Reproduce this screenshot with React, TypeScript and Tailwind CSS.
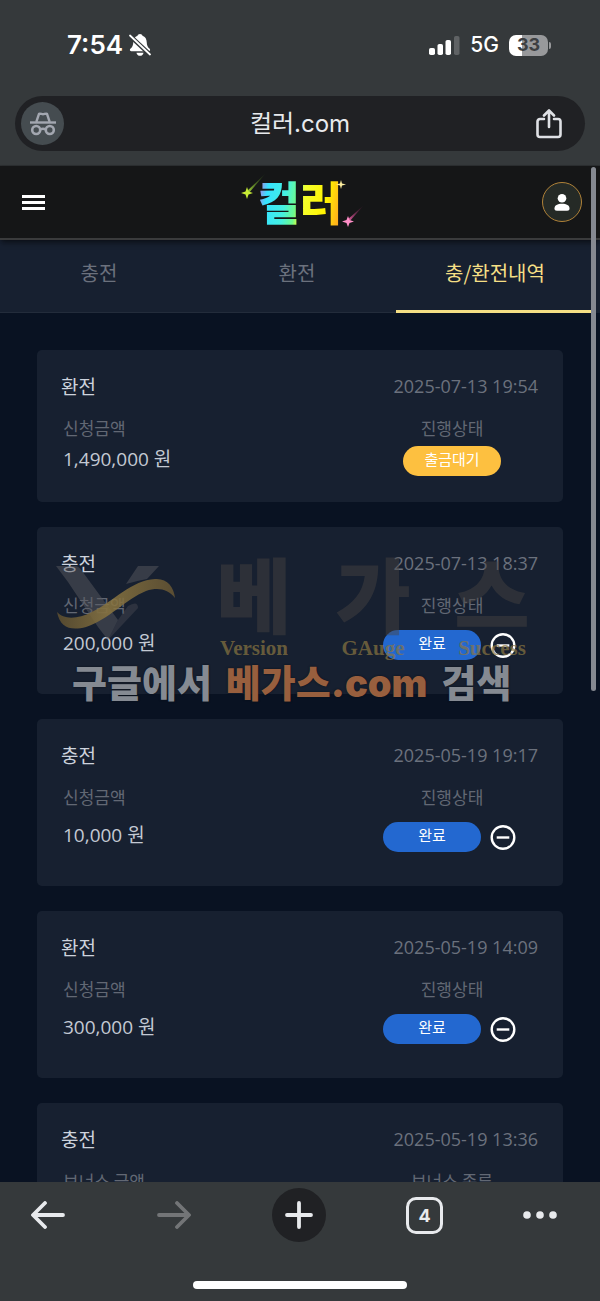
type Entry = {
  kind: string;
  date: string;
  amountLabel: string;
  amount: string;
  statusLabel: string;
  status: "pending" | "done";
};

const tabs = [
  { label: "충전", active: false },
  { label: "환전", active: false },
  { label: "충/환전내역", active: true },
];

const entries: Entry[] = [
  { kind: "환전", date: "2025-07-13 19:54", amountLabel: "신청금액", amount: "1,490,000 원", statusLabel: "진행상태", status: "pending" },
  { kind: "충전", date: "2025-07-13 18:37", amountLabel: "신청금액", amount: "200,000 원", statusLabel: "진행상태", status: "done" },
  { kind: "충전", date: "2025-05-19 19:17", amountLabel: "신청금액", amount: "10,000 원", statusLabel: "진행상태", status: "done" },
  { kind: "환전", date: "2025-05-19 14:09", amountLabel: "신청금액", amount: "300,000 원", statusLabel: "진행상태", status: "done" },
  { kind: "충전", date: "2025-05-19 13:36", amountLabel: "보너스 금액", amount: "10,000 원", statusLabel: "보너스 종류", status: "done" },
];

function StatusBar() {
  return (
    <div className="flex h-24 items-center justify-between pt-1 pr-[49px] pb-[10px] pl-[67px] text-white">
      <div className="flex items-center gap-[6px]">
        <span className="text-[26px] leading-8 font-semibold">7:54</span>
        <svg className="h-[22px] w-[22px]" viewBox="0 0 22 22" aria-hidden="true">
          <path d="M11 0C9.700 0 8.800.8 8.500 1.700 5.700 2.600 4.400 4.900 4.300 8c-.1 3.600-1 5-2.700 6.600C.5 15.700.6 17.200 2.200 17.200h17.600c1.600 0 1.700-1.500.6-2.600C18.700 13 17.800 11.600 17.700 8c-.1-3.100-1.400-5.400-4.200-6.300C13.200.8 12.300 0 11 0Z" fill="#fff" />
          <path d="M7.500 18.700h7c-.3 1.900-1.700 3.100-3.500 3.100s-3.200-1.200-3.500-3.100Z" fill="#fff" />
          <path d="M0 1 22 21.500" stroke="#35393b" strokeWidth="4.500" />
          <path d="M1 1.500 21 20.500" stroke="#fff" strokeWidth="1.800" strokeLinecap="round" />
        </svg>
      </div>
      <div className="flex items-center gap-[10px]">
        <svg className="h-[19px] w-[31px]" viewBox="0 0 31 19" aria-hidden="true">
          <rect x="0" y="12" width="6" height="7" rx="1.800" fill="#fff" />
          <rect x="8.500" y="8" width="5.500" height="11" rx="1.800" fill="#fff" />
          <rect x="16.500" y="4" width="5.500" height="15" rx="1.800" fill="#fff" />
          <rect x="25" y="0" width="5.500" height="19" rx="1.800" fill="#5f6264" />
        </svg>
        <span className="text-[21px] leading-7 font-medium">5G</span>
        <div className="flex items-center gap-px">
          <span className="flex h-[21px] w-[39px] items-center justify-center rounded-[7px] bg-linear-to-r from-white from-33% to-[#98999b] to-33% text-[18px] leading-5 font-bold text-[#3d4042]">
            33
          </span>
          <span className="h-[7px] w-[2px] rounded-r-full bg-[#98999b]" />
        </div>
      </div>
    </div>
  );
}

function AddressBar() {
  return (
    <div className="mx-[15px] mb-[14px] flex h-[55px] items-center justify-between rounded-full bg-[#202124] pr-[23px] pl-[6px]">
      <button aria-label="시크릿 모드" className="flex size-[43px] items-center justify-center rounded-full bg-[#454c50]">
        <svg className="h-6 w-[26px]" viewBox="0 0 26 24" fill="none" aria-hidden="true">
          <path d="M0 10.500h26" stroke="#a3a7b0" strokeWidth="2.400" />
          <path d="M6.300 10 9 1.800c1.500-.5 2.600.5 4 .5s2.500-1 4-.5L19.700 10" stroke="#a3a7b0" strokeWidth="2.400" strokeLinejoin="round" />
          <circle cx="6.200" cy="18" r="4" stroke="#a3a7b0" strokeWidth="2.600" />
          <circle cx="19.800" cy="18" r="4" stroke="#a3a7b0" strokeWidth="2.600" />
          <path d="M10 17.500c2-1 4-1 6 0" stroke="#a3a7b0" strokeWidth="2.400" />
        </svg>
      </button>
      <span className="text-[24px] leading-8 text-[#e8eaed]">컬러.com</span>
      <button aria-label="공유">
        <svg className="h-[30px] w-[26px]" viewBox="0 0 26 30" fill="none" stroke="#dfe1e5" strokeWidth="2.600" strokeLinecap="round" strokeLinejoin="round" aria-hidden="true">
          <path d="M8 10H4a2.500 2.500 0 0 0-2.500 2.500v13A2.500 2.500 0 0 0 4 28h18a2.500 2.500 0 0 0 2.500-2.500v-13A2.500 2.500 0 0 0 22 10h-4" />
          <path d="M13 18V2M8 6.500l5-5 5 5" />
        </svg>
      </button>
    </div>
  );
}

function Logo() {
  return (
    <a href="#" aria-label="컬러" className="relative flex h-[68px] w-[124px] items-center justify-center pr-1 pb-1">
      <span className="bg-linear-to-r bg-[linear-gradient(100deg,#c76be0_2%,#35e3ff_14%,#45f0e0_34%,#6dfb8c_46%,#f4ff2e_53%,#fff200_78%,#ffa51f_96%)] bg-clip-text text-[46px] leading-[60px] font-black text-transparent">
        컬러
      </span>
      <svg className="absolute inset-0 h-full w-full" viewBox="0 0 124 68" aria-hidden="true">
        <defs>
          <linearGradient id="tail-green" x1="0" y1="1" x2="1" y2="0">
            <stop offset="0" stopColor="#b9ef3f" />
            <stop offset="1" stopColor="#4b8a1e" stopOpacity="0" />
          </linearGradient>
          <linearGradient id="tail-pink" x1="0" y1="1" x2="1" y2="0">
            <stop offset="0" stopColor="#ff6cb6" />
            <stop offset="1" stopColor="#8a1e55" stopOpacity="0" />
          </linearGradient>
        </defs>
        <path d="M6 24 26 5 8 26Z" fill="url(#tail-green)" />
        <path d="m7 19 1.500 4.500L13 25l-4.500 1.500L7 31l-1.500-4.500L1 25l4.500-1.500Z" fill="#c9ec36" />
        <path d="M107 52 124 37l-15 17Z" fill="url(#tail-pink)" />
        <path d="m108 48 1.500 4 4.500 1.500-4.500 1.500-1.500 4-1.500-4-4.500-1.500 4.500-1.500Z" fill="#ff8fc8" />
        <path d="m101 12 1 3.500 4 1-4 1-1 3.500-1-3.500-4-1 4-1Z" fill="#fff0a0" />
      </svg>
    </a>
  );
}

function SiteHeader() {
  return (
    <header className="relative z-10 flex h-[74px] shrink-0 items-center justify-between border-b-2 border-[#3a3b3c] bg-[#151617] pr-[18px] pl-[22px] shadow-md shadow-black/40">
      <button aria-label="메뉴" className="flex w-10 flex-col gap-[3px]">
        <span className="h-[3px] w-[23px] bg-white" />
        <span className="h-[3px] w-[23px] bg-white" />
        <span className="h-[3px] w-[23px] bg-white" />
      </button>
      <Logo />
      <button aria-label="내 정보" className="flex size-10 items-center justify-center rounded-full border border-[#b08238] bg-[#252a26]">
        <svg className="h-[17px] w-4" viewBox="0 0 16 17" fill="#fff" aria-hidden="true">
          <circle cx="8" cy="4.300" r="4.300" />
          <path d="M.5 14.200C.5 11.400 3.500 9.800 8 9.800s7.500 1.600 7.500 4.400c0 1.800-.8 2.500-2.300 2.500H2.800C1.300 16.700.5 16 .5 14.200Z" />
        </svg>
      </button>
    </header>
  );
}

function TabBar() {
  return (
    <nav className="flex h-[73px] shrink-0 bg-[#172030] pr-[6px]">
      {tabs.map((tab) => (
        <a
          key={tab.label}
          href="#"
          className={
            tab.active
              ? "flex flex-1 items-center justify-center border-b-[3px] border-[#f5df85] pb-1 text-[20px] text-[#f5df85]"
              : "flex flex-1 items-center justify-center border-b border-[#232c3b] pb-[6px] text-[20px] text-[#6b717d]"
          }
        >
          {tab.label}
        </a>
      ))}
    </nav>
  );
}

function EntryCard({ entry }: { entry: Entry }) {
  const done = entry.status === "done";
  return (
    <article className="rounded-[5px] bg-[#172030] px-6 pt-6 pb-5">
      <div className="flex h-[26px] items-center justify-between text-[19px] leading-6">
        <h2 className="pb-[2px] text-[#cdd3dd]">{entry.kind}</h2>
        <time className="pr-px pb-[2px] font-['Open_Sans',sans-serif] text-[18px] text-[#6b717d]">{entry.date}</time>
      </div>
      <div className="mt-4 flex justify-between">
        <div className="pl-[2px]">
          <div className="h-6 text-[17px] leading-6 text-[#626874]">{entry.amountLabel}</div>
          <div
            className={
              done
                ? "flex h-[57px] items-center pb-1 font-['Open_Sans','Noto_Sans_CJK_KR',sans-serif] text-[19px] text-[#c3c9d3]"
                : "flex h-[42px] items-center pb-1 font-['Open_Sans','Noto_Sans_CJK_KR',sans-serif] text-[19px] text-[#c3c9d3]"
            }
          >
            {entry.amount}
          </div>
        </div>
        <div className="w-[174px]">
          <div className="h-6 text-center text-[17px] leading-6 text-[#626874]">{entry.statusLabel}</div>
          {done ? (
            <div className="flex h-[57px] items-center justify-center gap-2 pr-1 pb-[2px]">
              <span className="h-[30px] w-[98px] rounded-full bg-[#2368d0] text-center text-[15px] leading-[26px] text-white">완료</span>
              <button aria-label="내역 삭제">
                <svg className="size-7" viewBox="0 0 28 28" fill="none" stroke="#fff" strokeWidth="2.400" aria-hidden="true">
                  <circle cx="14" cy="14.500" r="11.300" />
                  <path d="M7.700 14.500h12.600" />
                </svg>
              </button>
            </div>
          ) : (
            <div className="flex h-[42px] items-center justify-center">
              <span className="h-[30px] w-[98px] rounded-full bg-[#fdc040] text-center text-[15px] leading-[26px] text-white">출금대기</span>
            </div>
          )}
        </div>
      </div>
    </article>
  );
}

const markWords = [
  { big: "베", small: "Version" },
  { big: "가", small: "GAuge" },
  { big: "스", small: "Success" },
];

function Watermark() {
  return (
    <div className="pointer-events-none absolute top-[554px] left-14 w-[476px]">
      <div className="flex h-[106px] justify-between">
        <svg className="mt-2 h-[80px] w-[122px]" viewBox="0 0 122 80" aria-hidden="true">
          <defs>
            <linearGradient id="swoosh" x1="0" y1="0" x2="1" y2="0">
              <stop offset="0" stopColor="#5f5030" />
              <stop offset="0.450" stopColor="#8b7640" />
              <stop offset="1" stopColor="#665533" />
            </linearGradient>
          </defs>
          <path d="M0 4h19q4 0 7 5L62 58 52 78 42 65 12 20Z" fill="#57575d" fillOpacity="0.500" />
          <path d="M62 58 72 44q10-6 10 2L52 78Z" fill="#57575d" fillOpacity="0.350" />
          <path d="M82 4h21L91 17Q80 19 70 22Z" fill="#57575d" fillOpacity="0.500" />
          <path d="M1 50C8 58 22 57 36 50 58 39 76 18 99 17c12-1 19 8 20 19-7-9-17-11-29-7C70 37 52 58 30 65 15 69 4 66 1 50Z" fill="url(#swoosh)" fillOpacity="0.850" />
        </svg>
        <div className="flex w-[318px] justify-between">
          {markWords.map((word) => (
            <div key={word.small} className="flex w-[80px] flex-col items-center gap-[6px]">
              <span className="text-[82px] leading-[76px] font-black text-[#4a4542]/45">{word.big}</span>
              <span className="font-['Liberation_Serif','Noto_Sans_CJK_KR',serif] text-[21px] leading-6 font-bold text-[#8b7640]/70">{word.small}</span>
            </div>
          ))}
        </div>
      </div>
      <p className="flex gap-[14px] pl-4 text-[38px] leading-[42px] font-black whitespace-nowrap text-[#858a92] text-shadow-[0_0_2px_#0b0f16]">
        <span>구글에서</span>
        <span className="text-[#985f3e]">
          베가스<span className="font-['Inter','Noto_Sans_CJK_KR',sans-serif]">.com</span>
        </span>
        <span>검색</span>
      </p>
    </div>
  );
}

function BrowserToolbar() {
  return (
    <footer className="relative shrink-0 bg-[#35393b] pb-3">
      <div className="flex h-[66px] items-center justify-between px-[21px]">
        <button aria-label="뒤로" className="flex w-[54px] justify-center">
          <svg className="h-7 w-[34px]" viewBox="0 0 34 28" fill="none" stroke="#e8eaed" strokeWidth="3.800" strokeLinecap="round" strokeLinejoin="round" aria-hidden="true">
            <path d="M32 14H2.500M14 2 2 14l12 12" />
          </svg>
        </button>
        <button aria-label="앞으로" className="flex w-[54px] justify-center" disabled>
          <svg className="h-7 w-[34px]" viewBox="0 0 34 28" fill="none" stroke="#737577" strokeWidth="3.800" strokeLinecap="round" strokeLinejoin="round" aria-hidden="true">
            <path d="M2 14h29.500M20 2l12 12-12 12" />
          </svg>
        </button>
        <button aria-label="새 탭" className="flex size-[54px] items-center justify-center rounded-full bg-[#202124]">
          <svg className="size-7" viewBox="0 0 28 28" stroke="#e8eaed" strokeWidth="3.800" strokeLinecap="round" aria-hidden="true">
            <path d="M14 2v24M2 14h24" />
          </svg>
        </button>
        <button aria-label="탭 4개" className="flex w-[54px] justify-center">
          <span className="flex size-[37px] items-center justify-center rounded-[10px] border-[3px] border-[#e8eaed] text-[18px] font-bold text-[#e8eaed]">4</span>
        </button>
        <button aria-label="더보기" className="flex w-[56px]">
          <svg className="h-2 w-[34px]" viewBox="0 0 34 8" fill="#e8eaed" aria-hidden="true">
            <circle cx="4" cy="4" r="3.800" />
            <circle cx="17" cy="4" r="3.800" />
            <circle cx="30" cy="4" r="3.800" />
          </svg>
        </button>
      </div>
      <div className="mx-auto mt-[33px] h-2 w-[214px] rounded-full bg-white" />
    </footer>
  );
}

export default function App() {
  return (
    <div className="relative flex h-screen flex-col overflow-hidden bg-[#091222] font-['Inter','Noto_Sans_CJK_KR',sans-serif]">
      <div className="shrink-0 border-b border-[#2c2f31] bg-[#35393b]">
        <StatusBar />
        <AddressBar />
      </div>
      <div className="relative flex min-h-0 flex-1 flex-col font-['Noto_Sans_CJK_KR',sans-serif]">
        <SiteHeader />
        <TabBar />
        <main className="flex min-h-0 flex-1 flex-col gap-[25px] overflow-hidden px-[37px] pt-[37px]">
          {entries.map((entry) => (
            <EntryCard key={entry.date} entry={entry} />
          ))}
        </main>
        <div className="absolute top-px right-1 z-20 h-[524px] w-[5px] rounded-full bg-[#858991]" />
      </div>
      <BrowserToolbar />
      <div className="font-['Noto_Sans_CJK_KR',sans-serif]">
        <Watermark />
      </div>
    </div>
  );
}
